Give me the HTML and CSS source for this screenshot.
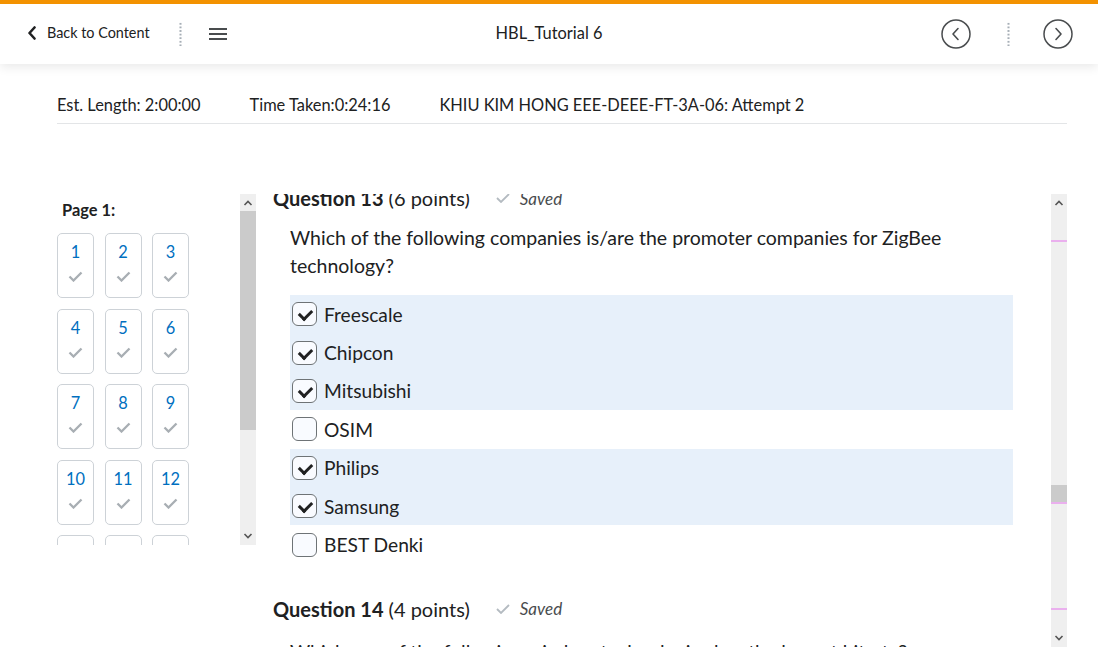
FILE: index.html
```html
<!DOCTYPE html>
<html lang="en">
<head>
<meta charset="utf-8">
<title>HBL_Tutorial 6</title>
<link rel="stylesheet" href="styles.css">
</head>
<body>
<header class="topbar">
  <div class="top-left">
    <a class="back" href="#">
      <svg class="back-icon" width="10" height="14" viewBox="0 0 10 14"><path d="M7.5 1.5 L2.5 7 L7.5 12.5" fill="none" stroke="#202122" stroke-width="2.6" stroke-linecap="round" stroke-linejoin="round"/></svg>
      <span>Back to Content</span>
    </a>
    <span class="dots-sep"></span>
    <svg class="menu-icon" width="18" height="14" viewBox="0 0 18 14"><path d="M0 2h18M0 7h18M0 12h18" stroke="#494c4e" stroke-width="2"/></svg>
  </div>
  <div class="top-title">HBL_Tutorial 6</div>
  <div class="top-right">
    <span class="circle-btn"><svg width="30" height="30" viewBox="0 0 30 30"><circle cx="15" cy="15" r="14" fill="none" stroke="#494c4e" stroke-width="1.5"/><path d="M17 9.5 L12 15 L17 20.5" fill="none" stroke="#494c4e" stroke-width="1.6" stroke-linecap="round" stroke-linejoin="round"/></svg></span>
    <span class="dots-sep right-sep"></span>
    <span class="circle-btn"><svg width="30" height="30" viewBox="0 0 30 30"><circle cx="15" cy="15" r="14" fill="none" stroke="#494c4e" stroke-width="1.5"/><path d="M13 9.5 L18 15 L13 20.5" fill="none" stroke="#494c4e" stroke-width="1.6" stroke-linecap="round" stroke-linejoin="round"/></svg></span>
  </div>
</header>

<div class="info-bar">
  <span>Est. Length: 2:00:00</span>
  <span>Time Taken:0:24:16</span>
  <span>KHIU KIM HONG EEE-DEEE-FT-3A-06: Attempt 2</span>
</div>

<main class="main">
  <aside class="side">
    <div class="side-scroll">
      <div class="page-label">Page 1:</div>
      <div class="tiles">
        <a class="tile" href="#"><span class="num">1</span><svg class="tick" width="15" height="11" viewBox="0 0 15 11"><path d="M1.5 5.5 L5.5 9.5 L13.5 1.5" fill="none" stroke="#a8aeb3" stroke-width="2.3"/></svg></a>
        <a class="tile" href="#"><span class="num">2</span><svg class="tick" width="15" height="11" viewBox="0 0 15 11"><path d="M1.5 5.5 L5.5 9.5 L13.5 1.5" fill="none" stroke="#a8aeb3" stroke-width="2.3"/></svg></a>
        <a class="tile" href="#"><span class="num">3</span><svg class="tick" width="15" height="11" viewBox="0 0 15 11"><path d="M1.5 5.5 L5.5 9.5 L13.5 1.5" fill="none" stroke="#a8aeb3" stroke-width="2.3"/></svg></a>
        <a class="tile" href="#"><span class="num">4</span><svg class="tick" width="15" height="11" viewBox="0 0 15 11"><path d="M1.5 5.5 L5.5 9.5 L13.5 1.5" fill="none" stroke="#a8aeb3" stroke-width="2.3"/></svg></a>
        <a class="tile" href="#"><span class="num">5</span><svg class="tick" width="15" height="11" viewBox="0 0 15 11"><path d="M1.5 5.5 L5.5 9.5 L13.5 1.5" fill="none" stroke="#a8aeb3" stroke-width="2.3"/></svg></a>
        <a class="tile" href="#"><span class="num">6</span><svg class="tick" width="15" height="11" viewBox="0 0 15 11"><path d="M1.5 5.5 L5.5 9.5 L13.5 1.5" fill="none" stroke="#a8aeb3" stroke-width="2.3"/></svg></a>
        <a class="tile" href="#"><span class="num">7</span><svg class="tick" width="15" height="11" viewBox="0 0 15 11"><path d="M1.5 5.5 L5.5 9.5 L13.5 1.5" fill="none" stroke="#a8aeb3" stroke-width="2.3"/></svg></a>
        <a class="tile" href="#"><span class="num">8</span><svg class="tick" width="15" height="11" viewBox="0 0 15 11"><path d="M1.5 5.5 L5.5 9.5 L13.5 1.5" fill="none" stroke="#a8aeb3" stroke-width="2.3"/></svg></a>
        <a class="tile" href="#"><span class="num">9</span><svg class="tick" width="15" height="11" viewBox="0 0 15 11"><path d="M1.5 5.5 L5.5 9.5 L13.5 1.5" fill="none" stroke="#a8aeb3" stroke-width="2.3"/></svg></a>
        <a class="tile" href="#"><span class="num">10</span><svg class="tick" width="15" height="11" viewBox="0 0 15 11"><path d="M1.5 5.5 L5.5 9.5 L13.5 1.5" fill="none" stroke="#a8aeb3" stroke-width="2.3"/></svg></a>
        <a class="tile" href="#"><span class="num">11</span><svg class="tick" width="15" height="11" viewBox="0 0 15 11"><path d="M1.5 5.5 L5.5 9.5 L13.5 1.5" fill="none" stroke="#a8aeb3" stroke-width="2.3"/></svg></a>
        <a class="tile" href="#"><span class="num">12</span><svg class="tick" width="15" height="11" viewBox="0 0 15 11"><path d="M1.5 5.5 L5.5 9.5 L13.5 1.5" fill="none" stroke="#a8aeb3" stroke-width="2.3"/></svg></a>
        <a class="tile" href="#" aria-label="13"></a>
        <a class="tile" href="#" aria-label="14"></a>
        <a class="tile" href="#" aria-label="15"></a>
      </div>
    </div>
    <div class="scrollbar">
      <svg class="arrow" width="16" height="14" viewBox="0 0 16 14"><path d="M4.5 9 L8 5.5 L11.5 9" fill="none" stroke="#555" stroke-width="1.6"/></svg>
      <div class="track side-track"><div class="thumb side-thumb"></div></div>
      <svg class="arrow" width="16" height="14" viewBox="0 0 16 14"><path d="M4.5 5 L8 8.5 L11.5 5" fill="none" stroke="#555" stroke-width="1.6"/></svg>
    </div>
  </aside>

  <section class="content">
    <div class="content-scroll">
      <div class="content-inner">
        <div class="q-head">
          <h2><b>Question 13</b> (6 points)</h2>
          <span class="saved"><svg width="14" height="10" viewBox="0 0 14 10"><path d="M1 5 L5 9 L13 1" fill="none" stroke="#b4bbc1" stroke-width="1.8"/></svg><i>Saved</i></span>
        </div>
        <div class="q-body">
          <p class="q-text">Which of the following companies is/are the promoter companies for ZigBee technology?</p>
          <ul class="options">
            <li class="opt sel"><span class="cb on"></span>Freescale</li>
            <li class="opt sel"><span class="cb on"></span>Chipcon</li>
            <li class="opt sel"><span class="cb on"></span>Mitsubishi</li>
            <li class="opt"><span class="cb"></span>OSIM</li>
            <li class="opt sel"><span class="cb on"></span>Philips</li>
            <li class="opt sel"><span class="cb on"></span>Samsung</li>
            <li class="opt"><span class="cb"></span>BEST Denki</li>
          </ul>
        </div>
        <div class="q-head q14">
          <h2><b>Question 14</b> (4 points)</h2>
          <span class="saved"><svg width="14" height="10" viewBox="0 0 14 10"><path d="M1 5 L5 9 L13 1" fill="none" stroke="#b4bbc1" stroke-width="1.8"/></svg><i>Saved</i></span>
        </div>
        <div class="q-body">
          <p class="q-text q14-text">Which one of the following wireless technologies has the lowest bitrate?</p>
        </div>
      </div>
    </div>
    <div class="scrollbar main-bar">
      <svg class="arrow" width="16" height="14" viewBox="0 0 16 14"><path d="M4.5 9 L8 5.5 L11.5 9" fill="none" stroke="#555" stroke-width="1.6"/></svg>
      <div class="track main-track"><div class="thumb main-thumb"></div></div>
      <svg class="arrow" width="16" height="14" viewBox="0 0 16 14"><path d="M4.5 5 L8 8.5 L11.5 5" fill="none" stroke="#555" stroke-width="1.6"/></svg>
      <span class="mark m1"></span>
      <span class="mark m2"></span>
      <span class="mark m3"></span>
    </div>
  </section>
</main>
</body>
</html>
```
FILE: styles.css
```css
* { box-sizing: border-box; }
html, body { margin: 0; padding: 0; background: #fff; }
body {
  font-family: Lato, "Open Sans", "Liberation Sans", sans-serif;
  color: #202122;
  width: 1098px;
  height: 665px;
  overflow: hidden;
}
a { color: inherit; text-decoration: none; }

/* top bar */
.topbar {
  border-top: 4px solid #f39200;
  height: 64px;
  display: grid;
  grid-template-columns: 1fr auto 1fr;
  align-items: center;
  background: #fff;
  box-shadow: 0 3px 10px rgba(0, 0, 0, 0.09);
  position: relative;
  z-index: 2;
}
.top-left {
  display: flex;
  align-items: center;
  padding-left: 27px;
}
.back {
  display: flex;
  align-items: center;
  font-size: 14.4px;
  line-height: 18px;
  color: #202122;
  margin-top: -2px;
}
.back-icon { margin-right: 10px; }
.dots-sep {
  display: inline-block;
  width: 3px;
  height: 24px;
  background-image: radial-gradient(circle, #a6aeb6 0.9px, transparent 1.3px);
  background-size: 3px 3.6px;
}
.top-left .dots-sep { margin-left: 29px; }
.menu-icon { margin-left: 27px; }
.top-title {
  font-size: 16.4px;
  line-height: 20px;
  color: #202122;
  margin-top: -2px;
}
.top-right {
  display: flex;
  align-items: center;
  justify-content: flex-end;
  padding-right: 25px;
}
.circle-btn { display: block; width: 30px; height: 30px; }
.circle-btn svg { display: block; }
.right-sep { margin: 0 33px 0 36px; }

/* info bar */
.info-bar {
  margin: 31px 31px 0 57px;
  padding-bottom: 8px;
  border-bottom: 1px solid #e3e5e7;
  display: flex;
  gap: 49px;
  font-size: 16.4px;
  line-height: 20px;
}

/* main */
.main {
  display: flex;
  margin: 70px 31px 0 57px;
  gap: 17px;
}
.side {
  display: flex;
  height: 351px;
}
.side-scroll {
  width: 183px;
  overflow: hidden;
}
.page-label {
  font-weight: 700;
  font-size: 16.4px;
  line-height: 20px;
  margin: 6px 0 13px 5px;
}
.tiles {
  display: grid;
  grid-template-columns: repeat(3, 37px);
  column-gap: 10.5px;
  row-gap: 10.6px;
}
.tile {
  height: 65px;
  border: 1px solid #cdd2d7;
  border-radius: 5px;
  display: flex;
  flex-direction: column;
  align-items: center;
  padding-top: 8px;
}
.num {
  font-size: 16.4px;
  line-height: 20px;
  color: #006fbf;
}
.tick { margin-top: 9px; }

/* fake scrollbars */
.scrollbar {
  width: 16px;
  background: #efefef;
  display: flex;
  flex-direction: column;
  align-items: center;
  position: relative;
}
.arrow { flex: none; display: block; margin: 2px 0; }
.track { flex: 1; width: 16px; position: relative; }
.thumb { position: absolute; left: 0; width: 16px; background: #cbcbcb; }
.side-thumb { top: -1px; height: 219px; }

.content {
  flex: 1;
  display: flex;
  height: 453px;
}
.content-scroll {
  flex: 1;
  overflow: hidden;
}
.content-inner {
  margin-top: -8px;
}
.q-head {
  display: flex;
  align-items: center;
  height: 24px;
}
.q-head h2 {
  margin: 0;
  font-size: 20px;
  font-weight: 400;
  line-height: 24px;
  color: #202122;
}
.q-head h2 b { font-weight: 700; }
.saved {
  display: flex;
  align-items: center;
  margin-left: 26px;
  font-size: 17px;
  color: #494c4e;
}
.saved svg { margin-right: 10px; }
.q-body {
  padding-left: 17px;
}
.q-text {
  width: 723px;
  margin: 14px 0 15px;
  font-size: 19.5px;
  line-height: 28px;
}
.options {
  list-style: none;
  margin: 0;
  padding: 0;
  width: 723px;
}
.opt {
  height: 38.4px;
  display: flex;
  align-items: center;
  padding-left: 2px;
  font-size: 19.2px;
}
.opt.sel { background: #e7f0fa; }
.cb {
  width: 25px;
  height: 24px;
  border: 1px solid #6e7376;
  border-radius: 6px;
  background: #f9fbff;
  margin-right: 7px;
  flex: none;
  position: relative;
}
.cb.on::after {
  content: "";
  position: absolute;
  left: 8px;
  top: 4px;
  width: 6px;
  height: 10px;
  border: solid #202122;
  border-width: 0 3px 3px 0;
  transform: rotate(45deg);
}
.q14 { margin-top: 33px; }
.q14-text { margin-top: 17px; }

.main-bar { width: 16px; }
.main-thumb { top: 273px; height: 17px; }
.mark {
  position: absolute;
  left: 0;
  width: 16px;
  height: 2px;
  background: #eab0ee;
}
.m1 { top: 46px; }
.m2 { top: 308px; }
.m3 { top: 414px; }
```
